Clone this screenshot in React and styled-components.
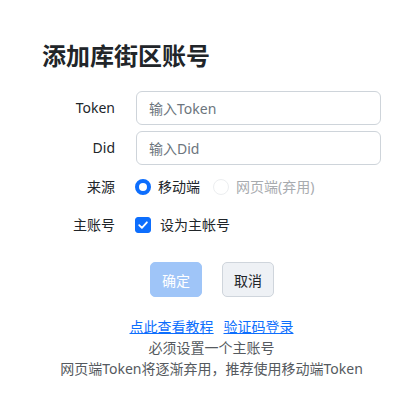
import React, { useState } from "react";
import styled, { createGlobalStyle } from "styled-components";

const GlobalStyle = createGlobalStyle`
  body {
    margin: 0;
    background: #ffffff;
    font-family: "Noto Sans", "Noto Sans CJK SC", sans-serif;
    color: #212529;
  }
`;

export default function App() {
  const [source, setSource] = useState("mobile");
  const [main, setMain] = useState(true);

  return (
    <Page>
      <GlobalStyle />
      <Title>添加库街区账号</Title>
      <Form>
        <Label>Token</Label>
        <Input placeholder="输入Token" />
        <Label>Did</Label>
        <Input placeholder="输入Did" />
        <Label>来源</Label>
        <Options>
          <Choice onClick={() => setSource("mobile")}>
            <Radio checked={source === "mobile"} />
            <span>移动端</span>
          </Choice>
          <Choice disabled>
            <Radio disabled />
            <span>网页端(弃用)</span>
          </Choice>
        </Options>
        <Label>主账号</Label>
        <Options>
          <Choice gap={9} onClick={() => setMain(!main)}>
            <Check checked={main}>
              {main && (
                <svg width="12" height="12" viewBox="0 0 12 12">
                  <path d="M2.2 6.2 L4.9 8.9 L9.9 3.3" fill="none" stroke="#fff" strokeWidth="1.8" strokeLinecap="round" strokeLinejoin="round" />
                </svg>
              )}
            </Check>
            <span>设为主帐号</span>
          </Choice>
        </Options>
      </Form>
      <Buttons>
        <Button primary disabled>确定</Button>
        <Button>取消</Button>
      </Buttons>
      <Notes>
        <Links>
          <a href="#">点此查看教程</a>
          <a href="#">验证码登录</a>
        </Links>
        <Line>必须设置一个主账号</Line>
        <Line>网页端Token将逐渐弃用，推荐使用移动端Token</Line>
      </Notes>
    </Page>
  );
}

const Page = styled.div`
  width: 420px;
  box-sizing: border-box;
  padding: 40px 39px 20px 40px;
`;

const Title = styled.h2`
  margin: 0 0 19px 2px;
  font-size: 24px;
  line-height: 32px;
  font-weight: 700;
  color: #212529;
`;

const Form = styled.div`
  display: grid;
  grid-template-columns: 75px 1fr;
  grid-template-rows: 34px 34px 32px 32px;
  column-gap: 21px;
  row-gap: 6px;
  align-items: center;
`;

const Label = styled.div`
  text-align: right;
  font-size: 14px;
  line-height: 20px;
  color: #212529;
`;

const Input = styled.input`
  box-sizing: border-box;
  height: 34px;
  width: 100%;
  padding: 0 12px;
  border: 1px solid #ced4da;
  border-radius: 6px;
  font-family: inherit;
  font-size: 14px;
  color: #212529;
  outline: none;
  &::placeholder {
    color: #6c757d;
  }
`;

const Options = styled.div`
  display: flex;
  align-items: center;
  gap: 13px;
  margin-left: -1px;
`;

const Choice = styled.label`
  display: flex;
  align-items: center;
  gap: ${(p) => (p.gap ? p.gap : 7)}px;
  font-size: 14px;
  line-height: 20px;
  color: ${(p) => (p.disabled ? "#a8abaf" : "#212529")};
  cursor: ${(p) => (p.disabled ? "default" : "pointer")};
`;

const Radio = styled.span`
  box-sizing: border-box;
  width: 16px;
  height: 16px;
  border-radius: 50%;
  flex-shrink: 0;
  background: #ffffff;
  border: ${(p) =>
    p.checked ? "4.5px solid #0d6efd" : p.disabled ? "1px solid #eceef0" : "1px solid #ced4da"};
`;

const Check = styled.span`
  box-sizing: border-box;
  width: 16px;
  height: 16px;
  border-radius: 3px;
  flex-shrink: 0;
  display: flex;
  align-items: center;
  justify-content: center;
  background: ${(p) => (p.checked ? "#0d6efd" : "#ffffff")};
  border: 1px solid ${(p) => (p.checked ? "#0d6efd" : "#ced4da")};
`;

const Buttons = styled.div`
  display: flex;
  justify-content: center;
  gap: 20px;
  margin-top: 21px;
  padding-left: 3px;
`;

const Button = styled.button`
  box-sizing: border-box;
  height: 35px;
  width: 52px;
  padding: 0;
  border-radius: 5px;
  font-family: inherit;
  font-size: 14px;
  border: 1px solid ${(p) => (p.primary ? "#9fc5f8" : "#cfd5dc")};
  background: ${(p) => (p.primary ? "#9fc5f8" : "#eef1f5")};
  color: ${(p) => (p.primary ? "#ffffff" : "#212529")};
`;

const Notes = styled.div`
  margin-top: 19px;
  text-align: center;
  font-size: 14px;
  color: #555a60;
  padding-left: 2px;
`;

const Links = styled.div`
  display: flex;
  justify-content: center;
  gap: 10px;
  height: 21px;
  line-height: 21px;
  a {
    color: #0d6efd;
    text-decoration: underline;
  }
`;

const Line = styled.div`
  height: 21px;
  line-height: 21px;
`;
